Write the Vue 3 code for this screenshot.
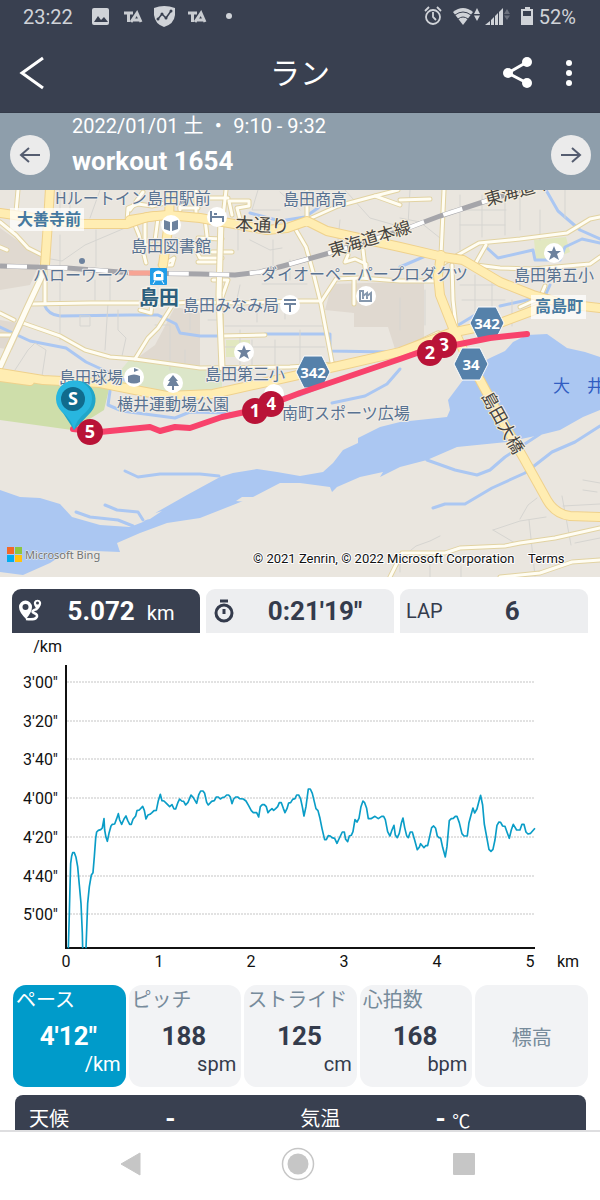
<script setup>
import { ref } from 'vue'

const activeTab = ref('distance')
const activeMetric = ref('pace')

const metrics = [
  { id: 'pace', label: 'ペース', value: '4\'12"', unit: '/km' },
  { id: 'pitch', label: 'ピッチ', value: '188', unit: 'spm' },
  { id: 'stride', label: 'ストライド', value: '125', unit: 'cm' },
  { id: 'heart', label: '心拍数', value: '168', unit: 'bpm' },
  { id: 'elevation', label: '標高' }
]

const paceTicks = ['3\'00"', '3\'20"', '3\'40"', '4\'00"', '4\'20"', '4\'40"', '5\'00"'].map((label, i) => ({
  label,
  y: Math.round(49 + i * 38.7)
}))
const kmTicks = [0, 1, 2, 3, 4, 5].map((km) => ({ km, x: Math.round(66 + km * 92.7) }))

const paceStart = '55,535 58,430 60,350 62,280 65,258 68,248 73,248 78,262 83,290 88,345 93,400 97,490 98,535'
const paceFirst = '108,535 110,480 113,400 118,350 124,315 129,308 133,260 137,205 140,186 145,181 152,179 157,174 162,146 164,180 168,202 172,214 177,190 183,168 187,163 194,162 200,146 205,131 209,150 215,163 222,147 228,138 233,151 239,163 244,163 249,148 257,138 261,122 268,120 278,109 283,121 288,147 294,135 300,133 306,128 312,122 319,121 325,92 331,73 336,92 342,93 350,101 359,110 366,104 372,117 377,117 384,97 389,87 395,93 401,94 407,105 414,97 423,75 430,83 440,100 446,75 452,63 459,63 464,70 470,97 475,105 485,94 493,92 499,81 505,81 511,87 517,83 524,81 530,75 536,75 541,81 546,101 551,87 557,81 563,81 569,86 580,87 588,93 596,107 604,122 610,128 620,128 626,141 631,110 637,104 643,104 649,110 654,128 660,121 666,116 671,121 677,116 683,110 688,98 694,98 700,115 705,128 711,116 716,99 722,98'
const paceSecond = '8,88 15,86 20,75 26,75 32,87 37,110 42,138 48,110 55,57 61,57 67,70 73,95 78,116 84,122 90,145 96,175 104,209 109,209 115,197 121,198 126,203 134,205 141,220 147,207 157,186 163,186 167,208 173,215 178,198 184,196 189,185 195,149 201,156 207,145 213,110 219,93 224,98 230,115 235,146 243,146 255,139 265,146 275,139 281,139 286,149 293,185 300,198 306,180 312,166 316,195 322,203 328,190 334,160 339,144 344,172 350,197 355,203 361,186 367,186 374,210 382,239 388,232 392,221 402,233 407,227 413,227 419,200 425,173 431,168 437,175 442,198 447,203 452,204 458,232 466,261 471,230 478,152 484,146 490,145 496,139 501,139 508,158 516,191 522,198 532,198 537,158 543,136 549,114 554,129 561,117 567,94 572,76 578,105 583,162 590,200 597,238 603,244 609,238 615,210 621,166 627,156 632,157 638,168 645,169 651,186 658,205 664,180 670,163 680,180 690,180 696,163 702,163 708,186 714,192 722,190 735,175'
const paceMain = paceFirst + ' ' + paceSecond.split(' ').map((p) => {
  const [x, y] = p.split(',').map(Number)
  return `${x + 720},${y}`
}).join(' ')

const minorRoads = [
  'M18 190L16 212', 'M0 222L16 235L28 248L44 256', 'M0 247L7 250', 'M30 304L90 303L152 303', 'M45 270V303',
  'M0 313L14 320', 'M0 335H12', 'M20 322L60 336L85 350L110 357L135 359L200 368L290 367L335 364',
  'M135 359L148 338L158 328L172 306', 'M152 303L151 313L140 310', 'M152 303L175 303L200 302L240 303L300 301L318 301',
  'M127 222L128 208L138 204L152 206L165 203', 'M130 210L143 192', 'M133 220L139 235L146 263', 'M145 218V245H164',
  'M158 218L154 248', 'M165 264L174 258L172 265H160', 'M180 190V210', 'M196 190V218', 'M180 208H198',
  'M176 240L194 246L200 258H222', 'M198 238L222 239', 'M198 262H216', 'M226 190L220 245L219 280L221 305L222 368',
  'M232 215L229 201H249V206L237 208L240 219', 'M200 198H228', 'M205 218L207 236', 'M212 252H232', 'M213 280H228L220 303',
  'M222 336L265 335', 'M307 190V221', 'M309 219L338 206L375 196L398 190', 'M375 196L400 205', 'M296 230L306 247L313 272L321 304L332 362',
  'M321 302L336 279L360 278L400 281L438 281', 'M354 279V304', 'M366 278V264L355 259L345 262L348 255', 'M363 250L366 276',
  'M444 190L441 255', 'M400 200L430 199', 'M442 264L479 243L520 239L567 233L590 219L600 217', 'M486 245L474 266', 'M476 265L500 268L533 269L590 264L600 257',
  'M452 265L453 300L456 327', 'M520 307L540 298L545 286', 'M390 577L402 553L445 553L460 548L505 546L520 543L555 538L600 528', 'M500 577L540 573L572 562L600 560'
]
const streets = [
  'M60 235V303M60 303V340', 'M45 258L62 261L85 245L125 228', 'M70 193V223', 'M100 190L90 218', 'M80 316V326H90V316H80', 'M108 303L105 350',
  'M118 310L118 330L126 338L122 356', 'M15 370L28 350L35 343L46 350L42 376', 'M95 280V300M110 276V303', 'M238 222V250', 'M258 190L252 210H280',
  'M250 225H292', 'M273 240V265M290 260V280M262 284H307', 'M240 285L237 299M275 340V365M252 340V365M225 326H325M225 347H325',
  'M340 220L337 250L360 245', 'M400 218L420 222L440 238M410 190L408 225M460 195V250M482 195V237M505 190V235M460 225H505M450 210H506',
  'M400 298V330M425 290V325M460 285H500M462 300H505M475 275V320M492 280V325M512 300V326M520 190V230M540 210V240M565 190V218',
  'M400 572V559L416 546L430 541L440 536', 'M520 519L528 505L537 498M493 530L520 521L546 517M493 530L515 543M529 520L535 576M562 496L571 545M563 506L600 504M583 480L600 483M583 490L597 492',
  'M430 577V562M461 577V566M575 543L600 538M280 192L300 210M345 190L370 218L398 226', 'M60 190V216M96 230V266M155 325H170V370M185 350V365M190 305V330',
  'M250 240L270 250L282 248M208 310H220M208 320H220M257 307V322M285 307V319M240 330V368M300 330V368'
]
const highways = [
  'M0 213L35 218L83 224L127 224L147 217L167 215L200 218L223 222L267 230L287 228L307 221L327 231L400 247L443 257L463 260L500 282L533 295L565 304L600 308',
  'M50 188L48 222L45 265', 'M170 188L169 222L163 265', 'M0 373L43 380L100 383L135 390L167 396L213 394L267 382L343 365L400 352L450 333L500 323L540 308',
  'M441 255L438 275L440 295L453 328L467 358L480 380L500 417L523 457L547 500Q555 514 570 516L600 517', 'M0 377L30 381M130 220L155 216'
]
const narrowHighways = ['M45 255L42 276L27 308L0 367', 'M438 334L400 352', 'M221 218L219 295L222 368']
const creeks = [
  'M44 304Q48 315 60 316L130 315H158L176 324L180 333L200 336H224', 'M0 327L30 341L66 348L86 362L125 380', 'M265 334H330V351L390 352',
  'M250 213L280 221L305 217L318 208L324 201', 'M546 190L558 211L580 230L600 239', 'M600 243L582 239L565 247L560 260H535L533 250L498 258L487 248',
  'M500 306L545 296L550 285M400 267L430 254M455 327L485 309', 'M125 471L138 477L160 474L200 474L219 476', 'M427 460L455 470L477 475L490 470L505 457L540 434',
  'M433 508L445 504L465 504L492 488L525 473L552 452L575 442L600 426', 'M105 505L117 510L138 512L143 520', 'M76 512L90 517L118 520L133 526',
  'M110 391L108 405L122 411L175 418L190 412L230 413', 'M332 403L365 396L387 384L400 369', 'M262 400L300 395L322 386'
]
const lapMarkers = [
  { n: '3', x: 444, y: 345 }, { n: '2', x: 430, y: 353 }, { n: '4', x: 271, y: 404 }, { n: '1', x: 255, y: 411 }, { n: '5', x: 90, y: 432 }
]
const shields = [{ n: '342', x: 313, y: 372 }, { n: '342', x: 487, y: 323 }, { n: '34', x: 471, y: 364 }]
const places = [
  { t: 'Hルートイン島田駅前', x: 55, y: 204 }, { t: '島田商高', x: 283, y: 205 }, { t: '島田図書館', x: 131, y: 252 }, { t: 'ハローワーク', x: 33, y: 281 },
  { t: 'ダイオーペーパープロダクツ', x: 261, y: 280 }, { t: '島田第五小', x: 514, y: 281 }, { t: '島田みなみ局', x: 183, y: 311 }, { t: '島田球場', x: 59, y: 383 },
  { t: '島田第三小', x: 205, y: 380 }, { t: '横井運動場公園', x: 117, y: 410 }, { t: '南町スポーツ広場', x: 282, y: 419 }
]
const poiSpots = [[171, 225], [217, 217], [290, 305], [366, 296], [554, 253], [244, 352], [134, 377], [173, 383], [274, 394]]
</script>

<template>
  <div class="app">
    <header class="top">
      <div class="status">
        <span class="clock">23:22</span>
        <svg class="notices" width="150" height="24" viewBox="0 0 150 24" aria-hidden="true">
          <rect x="9" y="3" width="17" height="17" rx="2" fill="#d0d3d8" />
          <path d="M11 17L15 11L18 15L21 12L25 17Z" fill="#394050" />
          <path d="M41 8H50M45.500 8V17M48 17L54 8L58 17M50 15H58" fill="none" stroke="#c9ccd1" stroke-width="3" />
          <path d="M71 3Q81 -1 92 3V10Q91 19 81 22Q72 19 71 10Z" fill="#d0d3d8" />
          <path d="M75 14L79 9L83 13L88 6" fill="none" stroke="#394050" stroke-width="1.500" /><g fill="#394050"><circle cx="75" cy="14" r="1.500" /><circle cx="79" cy="9" r="1.500" /><circle cx="83" cy="13" r="1.500" /><circle cx="88" cy="6" r="1.500" /></g>
          <path d="M105 8H114M109.500 8V17M112 17L118 8L122 17M114 15H122" fill="none" stroke="#c9ccd1" stroke-width="3" />
          <circle cx="146" cy="11" r="3" fill="#d0d3d8" />
        </svg>
        <svg class="signals" width="112" height="24" viewBox="0 0 112 24" aria-hidden="true">
          <g fill="none" stroke="#d0d3d8" stroke-width="1.800"><circle cx="9" cy="12" r="7" /><path d="M9 7V12L12 15M1 6L5 2M17 6L13 2" /></g>
          <path d="M29 7Q39 -1 49 7L39 20Z" fill="#d0d3d8" /><path d="M31 10Q39 4 47 10M34 14Q39 10 44 14" fill="none" stroke="#394050" stroke-width="1" />
          <path d="M50 9L53 3L56 9ZM50 10.500H56L53 16Z" fill="#d0d3d8" />
          <path d="M61 20L66 16V20ZM67 20V15L70 12V20ZM71 20V11L74 8V20ZM75 20V7L79 3V20Z" fill="#d0d3d8" />
          <path d="M80 9L83 4L86 9ZM80 10.500H86L83 15Z" fill="#6b707c" />
          <path d="M98 4H101V2H106V4H109V20H97V4Z" fill="#d0d3d8" /><rect x="99" y="6" width="8" height="5" fill="#394050" />
        </svg>
        <span class="percent">52%</span>
      </div>
      <div class="titlebar">
        <button class="icon-button back" aria-label="戻る"><svg width="28" height="36" viewBox="0 0 28 36"><path d="M25 3L4 18L25 33" fill="none" stroke="#fff" stroke-width="3" /></svg></button>
        <h1>ラン</h1>
        <div class="actions">
          <button class="icon-button" aria-label="共有"><svg width="32" height="36" viewBox="0 0 32 36"><path d="M26 7L7 18L26 28" fill="none" stroke="#fff" stroke-width="3" /><g fill="#fff"><circle cx="26" cy="7" r="5" /><circle cx="7" cy="18" r="5" /><circle cx="26" cy="28" r="5" /></g></svg></button>
          <button class="icon-button" aria-label="メニュー"><svg width="8" height="36" viewBox="0 0 8 36"><g fill="#fff"><circle cx="4" cy="8" r="3" /><circle cx="4" cy="18" r="3" /><circle cx="4" cy="28" r="3" /></g></svg></button>
        </div>
      </div>
    </header>

    <section class="workout">
      <button class="round" aria-label="前へ"><svg width="24" height="24" viewBox="0 0 24 24"><path d="M22 12H3M11 5L3 12L11 19" /></svg></button>
      <div class="summary">
        <p>2022/01/01 土 ・ 9:10 - 9:32</p>
        <h2>workout 1654</h2>
      </div>
      <button class="round" aria-label="次へ"><svg width="24" height="24" viewBox="0 0 24 24"><path d="M2 12H21M13 5L21 12L13 19" /></svg></button>
    </section>

    <main>
      <svg class="map" viewBox="0 190 600 387" role="img" aria-label="コースマップ">
        <rect y="190" width="600" height="387" fill="#eae6df" />
        <g fill="#e0d9d0"><path d="M0 228L42 258L30 285L0 290ZM0 320L24 324L12 350L0 348ZM155 345L175 307L200 312V366L136 359ZM332 284L400 282H424V340L395 349L388 327H354V313L325 310Z" /></g>
        <path d="M0 377L60 384L110 385L104 410L72 430L0 420Z" fill="#cedeaa" />
        <path d="M130 359L222 369V390L200 395L160 394L110 383Z" fill="#dce6c9" />
        <path d="M226 340H250V357H226ZM534 240L566 237L570 252L550 260H536Z" fill="#e2e8c0" />
        <path class="water" d="M0 490L20 497L40 498L60 504L72 517L100 525L130 527L143 522L157 512L187 495L220 477L233 473L257 469L277 472L300 476L323 472L333 463L343 450L358 443V438L380 427L400 422L447 417L450 410L448 400L463 380L475 366L490 358L505 351L513 342L527 335L547 334L567 348L585 352L600 357V410L583 417L560 430L540 435L507 442L457 447L427 460L400 467L380 477L383 472L360 477L337 487L332 492L330 487L300 483L280 483L253 497L233 505L200 518L167 523L140 533L117 543L120 552L70 550L50 563L23 575L0 572Z" />
        <path d="M236 501L242 497L256 497L247 502ZM152 514L145 520L150 519L162 511Z" fill="#eae6df" />
        <g class="creek"><path v-for="d in creeks" :key="d" :d="d" /></g>
        <g class="street"><path v-for="d in streets" :key="d" :d="d" /></g>
        <g class="road edge"><path v-for="d in minorRoads" :key="d" :d="d" /></g>
        <g class="road fill"><path v-for="d in minorRoads" :key="d" :d="d" /></g>
        <g class="road edge wide"><path v-for="d in narrowHighways" :key="d" :d="d" /></g>
        <g class="road fill wide"><path v-for="d in narrowHighways" :key="d" :d="d" /></g>
        <g class="highway edge"><path v-for="d in highways" :key="d" :d="d" /></g>
        <g class="highway fill"><path v-for="d in highways" :key="d" :d="d" /></g>
        <path d="M0 266L67 268L133 273L200 274L235 275L260 272L283 266L333 252L400 231L440 216L483 202L530 187" fill="none" stroke="#a5a5aa" stroke-width="5" />
        <path d="M0 266L67 268L133 273L200 274L235 275L260 272L283 266L333 252L400 231L440 216L483 202L530 187" fill="none" stroke="#fff" stroke-width="4" stroke-dasharray="20 20.500" stroke-dashoffset="-7" />
        <path d="M129 273H150" stroke="#f7a494" stroke-width="5" />

        <rect x="10" y="208" width="74" height="23" fill="#fff" opacity=".7" />
        <rect x="531" y="295" width="55" height="24" fill="#fff" opacity=".7" />
        <g v-for="([x, y], i) in poiSpots" :key="i"><circle :cx="x" :cy="y" r="10" fill="#fff" /></g>
        <g class="poi">
          <path d="M164 220L170 222V231L164 229ZM178 220L172 222V231L178 229Z" />
          <path d="M211 211V222M211 217H223V222M214 214H217" fill="none" stroke="#6d829e" stroke-width="2" />
          <path d="M284 300H296M284 304H296M290 304V312" fill="none" stroke="#6d829e" stroke-width="2" />
          <path d="M360 301V291H363V296L367 293V296L371 293V301ZM363 299V297M367 299V297" fill="none" stroke="#8799ae" stroke-width="2" />
          <path d="M554 246L556 251H561L557 254L559 260L554 257L549 260L551 254L547 251H552ZM244 345L246 350H251L247 353L249 359L244 356L239 359L241 353L237 350H242Z" />
          <path d="M134 374V368L139 370L134 372M128 376Q134 373 140 376V382Q134 385 128 382Z" />
          <path d="M173 375L178 381H176L179 386H174V390H172V386H167L170 381H168Z" />
          <circle cx="82" cy="261" r="3" />
        </g>
        <g><rect x="150" y="268" width="17" height="17" rx="1" fill="#219de8" /><path d="M154 273Q158 269 163 273V280H154ZM155 281L153 284M162 281L164 284" fill="#fff" stroke="#fff" stroke-width="1" /><path d="M156 274H161V277H156Z" fill="#219de8" /></g>

        <g class="place"><text v-for="p in places" :key="p.t" :x="p.x" :y="p.y">{{ p.t }}</text></g>
        <g class="district"><text x="17" y="225">大善寺前</text><text x="535" y="312">高島町</text></g>
        <text class="station" x="139" y="305">島田</text>
        <g class="roadname">
          <text transform="translate(235 230) rotate(3)" class="street-name">本通り</text>
          <text transform="translate(331 257) rotate(-17)">東海道本線</text>
          <text transform="translate(487 206) rotate(-16)">東海道本線</text>
          <text transform="translate(481 396) rotate(61)">島田大橋</text>
        </g>
        <g class="river-name"><text x="553" y="392">大</text><text x="587" y="392">井</text></g>

        <g v-for="(s, i) in shields" :key="'s' + i" :transform="`translate(${s.x} ${s.y})`" class="shield">
          <path d="M-9 -16H9L17 0L9 16H-9L-17 0Z" /><text y="6">{{ s.n }}</text>
        </g>
        <path d="M73 429L100 432L150 427L160 431L175 427L190 428L222 417L245 412L271 404L300 393L400 359L420 352L450 346L490 338L527 334" fill="none" stroke="#f8436c" stroke-width="6" stroke-linejoin="round" stroke-linecap="round" />
        <path d="M74 430L63 413A19 19 0 1 1 91 412Z" fill="#20a6c9" />
        <path d="M74 430Q72 420 62 412A18 18 0 1 1 86 412Q76 420 74 430Z" fill="#28b6df" />
        <circle cx="73" cy="399" r="12" fill="#106b8d" />
        <text class="pin" x="73" y="405">S</text>
        <g v-for="m in lapMarkers" :key="m.n"><circle :cx="m.x" :cy="m.y" r="13" fill="#b91337" /><text class="pin" :x="m.x" :y="m.y + 6">{{ m.n }}</text></g>

        <g><rect x="7" y="547" width="7" height="7" fill="#f26829" /><rect x="15" y="547" width="7" height="7" fill="#8dc63f" /><rect x="7" y="555" width="7" height="7" fill="#00adef" /><rect x="15" y="555" width="7" height="7" fill="#ffc20e" /></g>
        <text class="bing" x="25" y="559">Microsoft Bing</text>
        <text class="credit" x="253" y="563">© 2021 Zenrin, © 2022 Microsoft Corporation</text>
        <a href="#terms"><text class="credit" x="528" y="563">Terms</text></a>
      </svg>

      <nav class="tabs">
        <button :class="{ active: activeTab === 'distance' }" @click="activeTab = 'distance'">
          <svg width="26" height="26" viewBox="0 0 26 26" aria-hidden="true">
            <path d="M8 21Q1 14 1 9A6.500 6.500 0 0 1 14 9Q14 14 8 21Z" fill="currentColor" /><circle cx="7.500" cy="9" r="3" class="pin-hole" />
            <path d="M19.500 12Q15 7 16 4A3.800 3.800 0 0 1 23 4Q24 7 19.500 12Z" fill="currentColor" /><circle cx="19.500" cy="5" r="1.500" class="pin-hole" />
            <path d="M19 11Q12 13 16 15Q21 17 18 20Q16 22 8 21" fill="none" stroke="currentColor" stroke-width="2.500" />
          </svg>
          <span class="reading"><strong>5.072</strong><small>km</small></span>
        </button>
        <button :class="{ active: activeTab === 'time' }" @click="activeTab = 'time'">
          <svg width="26" height="26" viewBox="0 0 26 26" aria-hidden="true"><g fill="none" stroke="currentColor" stroke-width="3"><circle cx="12" cy="15" r="8" /><path d="M8 3H16M12 11V16" /></g></svg>
          <span class="reading"><strong>0:21'19"</strong></span>
        </button>
        <button :class="{ active: activeTab === 'lap' }" @click="activeTab = 'lap'">
          <span class="lap">LAP</span><span class="reading"><strong>6</strong></span>
        </button>
      </nav>

      <svg class="chart" viewBox="0 0 600 347" role="img" aria-label="ペースのグラフ">
        <text x="62" y="19" text-anchor="end">/km</text>
        <g v-for="t in paceTicks" :key="t.label"><text x="58" :y="t.y + 6" text-anchor="end">{{ t.label }}</text><path class="grid" :d="`M67 ${t.y}H535`" /></g>
        <path d="M66 32V315H535" fill="none" stroke="#111" stroke-width="2" />
        <g transform="translate(50 137) scale(.3333)" class="pace-line"><polyline :points="paceStart" /><polyline :points="paceMain" /></g>
        <text v-for="t in kmTicks" :key="t.km" :x="t.x" y="334" text-anchor="middle">{{ t.km }}</text>
        <text x="568" y="334" text-anchor="middle">km</text>
      </svg>

      <div class="metrics">
        <button v-for="m in metrics" :key="m.id" :class="{ active: activeMetric === m.id, empty: !m.value }" @click="activeMetric = m.id">
          <span class="name">{{ m.label }}</span>
          <template v-if="m.value"><strong>{{ m.value }}</strong><span class="unit">{{ m.unit }}</span></template>
        </button>
      </div>

      <dl class="weather"><dt>天候</dt><dd>-</dd><dt>気温</dt><dd>- <small>℃</small></dd></dl>
    </main>

    <footer class="system">
      <button aria-label="戻る"><svg width="24" height="26" viewBox="0 0 24 26"><path d="M2 13L21 2V24Z" fill="#c6c6c6" stroke="#c6c6c6" stroke-linejoin="round" /></svg></button>
      <button aria-label="ホーム"><svg width="34" height="34" viewBox="0 0 34 34"><circle cx="17" cy="17" r="15.500" fill="none" stroke="#c6c6c6" stroke-width="1.500" /><circle cx="17" cy="17" r="10.500" fill="#c6c6c6" /></svg></button>
      <button aria-label="履歴"><svg width="24" height="24" viewBox="0 0 24 24"><rect x="1" y="1" width="22" height="22" rx="1" fill="#c6c6c6" /></svg></button>
    </footer>
  </div>
</template>

<style>
body { margin: 0; background: #fff; }
</style>

<style scoped>
* { box-sizing: border-box; }
.app { height: 100vh; display: flex; flex-direction: column; font-family: Roboto, "Noto Sans CJK JP", sans-serif; color: #343b4c; background: #fff; }
button { appearance: none; border: 0; padding: 0; background: none; color: inherit; font: inherit; cursor: pointer; }
h1, h2, p, dl, dd { margin: 0; }
.top { background: #394050; color: #fff; border-bottom: 1px solid #343b49; flex: none; }
.status { height: 34px; display: flex; align-items: center; padding: 0 24px 0 23px; font-size: 20px; color: #d0d3d8; }
.notices { margin-left: 10px; }
.signals { margin-left: auto; }
.percent { margin-left: 3px; }
.titlebar { height: 78px; display: grid; grid-template-columns: 1fr auto 1fr; align-items: center; padding: 0 27px; }
.icon-button { display: block; justify-self: start; }
.icon-button svg { display: block; }
.back { margin-left: -9px; }
h1 { font: 400 30px/40px "Noto Sans CJK JP", sans-serif; padding-bottom: 4px; }
.actions { display: flex; justify-content: flex-end; gap: 32px; }
.workout { height: 77px; flex: none; display: flex; align-items: center; padding: 0 9px 0 10px; gap: 22px; background: #8e9eab; color: #fff; }
.summary { flex: 1; align-self: flex-start; }
.summary p { font-size: 20px; line-height: 26px; }
.summary h2 { font-size: 26px; line-height: 32px; margin-top: 6px; font-weight: 700; }
.round { width: 40px; height: 40px; flex: none; border-radius: 50%; background: #ebebeb; display: grid; place-items: center; margin-top: 6px; }
.round path { fill: none; stroke: #555d70; stroke-width: 2; }
main { flex: 1; min-height: 0; overflow: hidden; }
.map, .chart { display: block; width: 100%; height: auto; }
.water { fill: #abc7f2; }
.creek, .street, .road, .highway { fill: none; stroke-linejoin: round; stroke-linecap: round; }
.creek { stroke: #abc7f2; stroke-width: 3; }
.street { stroke: #d6d5d1; stroke-width: 1; }
.road.edge { stroke: #e2d3a2; stroke-width: 5; }
.road.fill { stroke: #fffdf3; stroke-width: 3; }
.road.edge.wide { stroke-width: 7; }
.road.fill.wide { stroke-width: 5; }
.highway.edge { stroke: #efd18c; stroke-width: 10; }
.highway.fill { stroke: #ffedb2; stroke-width: 8; }
.poi { fill: #6d829e; }
.map text { font-family: "Noto Sans CJK JP", sans-serif; paint-order: stroke; stroke-linejoin: round; }
.place text { font-size: 16px; fill: #587291; stroke: #f0ede8; stroke-width: 2px; }
.district text { font-size: 16px; font-weight: 700; fill: #4579a0; }
.map .station { font-size: 20px; font-weight: 700; fill: #2c5f7d; stroke: #f5f2ea; stroke-width: 3px; }
.roadname text { font-size: 17px; fill: #464440; stroke: #f7efdc; stroke-width: 2px; }
.roadname .street-name { font-size: 18px; }
.river-name text { font-size: 17px; fill: #315dc2; }
.shield path { fill: #5581aa; stroke: #fff; stroke-width: 1; stroke-linejoin: round; }
.map .shield text { font: 700 15px "Open Sans", sans-serif; fill: #fff; text-anchor: middle; }
.map .pin { font: 700 18px "Open Sans", sans-serif; fill: #fff; text-anchor: middle; }
.map .bing { font: 12px "Noto Sans", sans-serif; font-size: 11px; fill: #737373; stroke: #eef0ef; stroke-width: 1px; }
.map .credit { font: 13px Roboto, sans-serif; fill: #111; stroke: #fff; stroke-width: 2px; }
.tabs { display: grid; grid-template-columns: repeat(3, 1fr); gap: 6px; margin: 12px 12px 0; }
.tabs button { height: 44px; display: flex; align-items: center; padding: 0 2px 0 6px; border-radius: 9px 9px 0 0; background: #edeef0; }
.tabs svg { flex: none; }
.tabs .pin-hole { fill: #394050; }
.reading { flex: 1; display: flex; align-items: baseline; justify-content: center; gap: 12px; }
.reading strong { font-size: 26px; }
.reading small { font-size: 20px; }
.lap { font-size: 20px; }
.tabs .lap + .reading { padding-right: 4px; }
.tabs .active { background: #394050; color: #fff; }
.chart text { font-size: 16px; fill: #111; }
.grid { stroke: #c5c5c5; stroke-width: 1; stroke-dasharray: 2 1; }
.pace-line polyline { fill: none; stroke: #0a9dc7; stroke-width: 5; stroke-linejoin: round; }
.metrics { display: grid; grid-template-columns: repeat(5, 1fr); gap: 3px; margin: 5px 12px 0 13px; }
.metrics button { height: 102px; display: flex; flex-direction: column; align-items: flex-start; border-radius: 13px; background: #f2f3f5; padding: 0 5px 0 3px; overflow: hidden; }
.metrics .name { font-size: 20px; line-height: 30px; color: #778b9b; white-space: nowrap; }
.metrics strong { align-self: center; font-size: 26px; line-height: 32px; margin-top: 5px; }
.metrics .unit { align-self: flex-end; font-size: 20px; line-height: 24px; }
.metrics .active { background: #009bca; color: #fff; }
.metrics .active .name { color: #fff; }
.metrics .empty { align-items: center; justify-content: center; padding: 4px 0 0; }
.weather { display: grid; grid-template-columns: 2fr 3fr 2fr 4fr; margin: 8px 14px 0 15px; padding: 7px 0 6px 14px; border-radius: 8px 8px 0 0; background: #394050; color: #fff; font-size: 20px; line-height: 34px; }
.weather dt:nth-of-type(2) { padding-left: 18px; }
.weather dd { font-weight: 700; font-size: 26px; padding-left: 35px; }
.weather dd:last-child { padding-left: 52px; }
.weather small { font-size: 18px; font-weight: 400; }
.system { height: 70px; flex: none; border-top: 2px solid #dedee0; background: #fff; display: flex; align-items: center; justify-content: space-between; padding: 0 124px 4px 119px; }
.system button, .system svg { display: block; }
</style>
